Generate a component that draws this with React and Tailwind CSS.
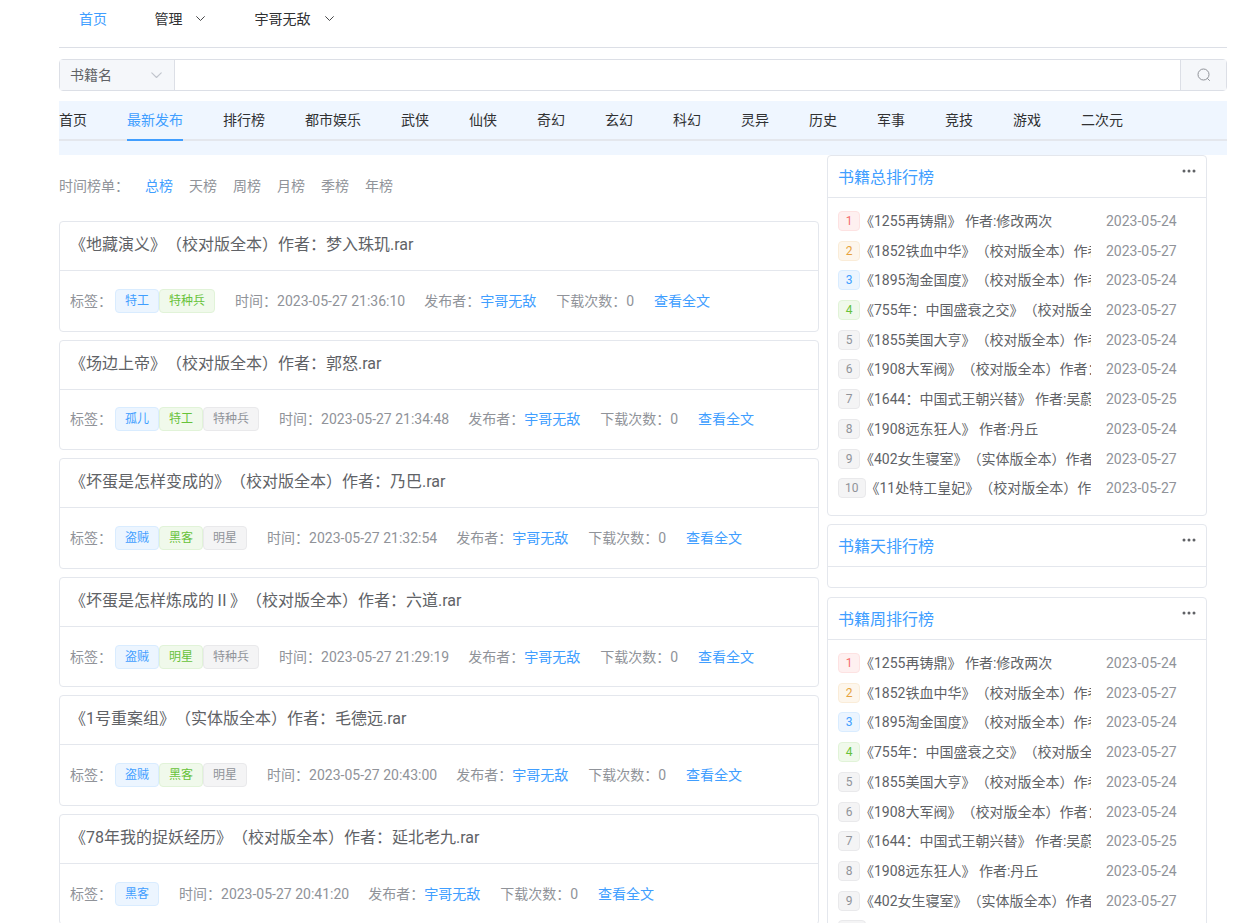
import React from "react";

const tabs = ["首页","最新发布","排行榜","都市娱乐","武侠","仙侠","奇幻","玄幻","科幻","灵异","历史","军事","竞技","游戏","二次元"];
const periods = ["总榜","天榜","周榜","月榜","季榜","年榜"];
const tagStyles = {
  blue: "bg-[#ecf5ff] border-[#d9ecff] text-[#409eff]",
  green: "bg-[#f0f9eb] border-[#e1f3d8] text-[#67c23a]",
  gray: "bg-[#f4f4f5] border-[#e9e9eb] text-[#909399]",
  red: "bg-[#fef0f0] border-[#fde2e2] text-[#f56c6c]",
  orange: "bg-[#fdf6ec] border-[#faecd8] text-[#e6a23c]",
};
const books = [
  { t: "《地藏演义》（校对版全本）作者：梦入珠玑.rar", tags: [["特工","blue"],["特种兵","green"]], time: "2023-05-27 21:36:10" },
  { t: "《场边上帝》（校对版全本）作者：郭怒.rar", tags: [["孤儿","blue"],["特工","green"],["特种兵","gray"]], time: "2023-05-27 21:34:48" },
  { t: "《坏蛋是怎样变成的》（校对版全本）作者：乃巴.rar", tags: [["盗贼","blue"],["黑客","green"],["明星","gray"]], time: "2023-05-27 21:32:54" },
  { t: "《坏蛋是怎样炼成的Ⅱ》（校对版全本）作者：六道.rar", tags: [["盗贼","blue"],["明星","green"],["特种兵","gray"]], time: "2023-05-27 21:29:19" },
  { t: "《1号重案组》（实体版全本）作者：毛德远.rar", tags: [["盗贼","blue"],["黑客","green"],["明星","gray"]], time: "2023-05-27 20:43:00" },
  { t: "《78年我的捉妖经历》（校对版全本）作者：延北老九.rar", tags: [["黑客","blue"]], time: "2023-05-27 20:41:20" },
];
const ranks = [
  ["《1255再铸鼎》 作者:修改两次","2023-05-24"],
  ["《1852铁血中华》（校对版全本）作者：","2023-05-27"],
  ["《1895淘金国度》（校对版全本）作者：","2023-05-24"],
  ["《755年：中国盛衰之交》（校对版全本）","2023-05-27"],
  ["《1855美国大亨》（校对版全本）作者：","2023-05-24"],
  ["《1908大军阀》（校对版全本）作者：","2023-05-24"],
  ["《1644：中国式王朝兴替》 作者:吴蔚","2023-05-25"],
  ["《1908远东狂人》 作者:丹丘","2023-05-24"],
  ["《402女生寝室》（实体版全本）作者：","2023-05-27"],
  ["《11处特工皇妃》（校对版全本）作者：","2023-05-27"],
];
const rankColor = ["red","orange","blue","green"];

function Chevron({ className, w = 9 }) {
  return (
    <svg className={className} width={w} height={w * 0.6} viewBox="0 0 10 6" fill="none" stroke="currentColor" strokeWidth="1" strokeLinecap="round" strokeLinejoin="round">
      <path d="M0.7 0.7 L5 5 L9.3 0.7" />
    </svg>
  );
}

function Tag({ label, color }) {
  return <span className={`inline-flex items-center h-6 px-[9px] rounded border text-xs ${tagStyles[color]}`}>{label}</span>;
}

function BookCard({ b }) {
  return (
    <div className="h-[110.6px] mb-2 rounded border border-[#e4e7ed] bg-white flex flex-col">
      <div className="h-[49px] px-[10px] pb-[2px] flex items-center border-b border-[#e4e7ed] text-base text-[#606266]">{b.t}</div>
      <div className="flex-1 px-[10px] flex items-center text-sm text-[#909399]">
        <span>标签：</span>
        <span className="flex ml-[3px] mr-5">{b.tags.map(([l, c]) => <Tag key={l} label={l} color={c} />)}</span>
        <span>时间：{b.time}</span>
        <span className="ml-[19px]">发布者：<span className="text-[#409eff]">宇哥无敌</span></span>
        <span className="ml-5">下载次数：0</span>
        <span className="ml-5 text-[#409eff]">查看全文</span>
      </div>
    </div>
  );
}

function RankCard({ title, rows }) {
  return (
    <div className="rounded border border-[#e4e7ed] bg-white">
      <div className="relative h-[42px] px-[10px] pt-[3px] flex items-center border-b border-[#e4e7ed] text-base text-[#409eff]">
        {title}
        <svg className="absolute right-[10px] top-[12px]" width="14" height="6" viewBox="0 0 14 6" fill="#606266">
          <circle cx="2" cy="3" r="1.5" /><circle cx="7" cy="3" r="1.5" /><circle cx="12" cy="3" r="1.5" />
        </svg>
      </div>
      {rows ? (
        <div className="pt-[8.2px] pb-[11.8px] px-[10px]">
          {rows.map(([text, date], i) => (
            <div key={i} className="h-[29.7px] flex items-center text-sm">
              <div className="w-[253px] flex items-center overflow-hidden whitespace-nowrap text-[#606266]">
                <span className={`shrink-0 inline-flex items-center justify-center h-5 px-[6px] min-w-[22px] rounded border text-xs ${tagStyles[rankColor[i] || "gray"]}`}>{i + 1}</span>
                <span>{text}</span>
              </div>
              <span className="ml-[15px] text-[#909399]">{date}</span>
            </div>
          ))}
        </div>
      ) : <div className="h-5" />}
    </div>
  );
}

export default function App() {
  return (
    <div className="h-[923px] overflow-hidden bg-white pl-[59px] pr-[22px] font-['Roboto','Noto_Sans_CJK_SC',sans-serif] text-sm [text-spacing-trim:space-all]">
      <nav className="h-12 flex items-center border-b border-[#dcdfe6] pb-[10px] text-[#303133]">
        <span className="ml-5 text-[#409eff]">首页</span>
        <span className="ml-[47.5px]">管理</span>
        <Chevron className="ml-[13px]" />
        <span className="ml-[50px]">宇哥无敌</span>
        <Chevron className="ml-[14px]" />
      </nav>

      <div className="mt-[11px] h-8 flex rounded border border-[#dcdfe6] text-[#606266]">
        <div className="w-[115px] flex items-center justify-between pl-[10px] pr-[12px] bg-[#f5f7fa] border-r border-[#dcdfe6]">
          <span>书籍名</span>
          <Chevron className="text-[#c0c4cc]" w={11} />
        </div>
        <div className="flex-1" />
        <div className="w-[46px] flex items-center justify-center bg-[#f5f7fa] border-l border-[#dcdfe6]">
          <svg width="14" height="14" viewBox="0 0 14 14" fill="none" stroke="#909399" strokeWidth="1">
            <circle cx="6.5" cy="6.5" r="5.5" />
            <path d="M10.5 10.5 L12.5 12.5" strokeLinecap="round" />
          </svg>
        </div>
      </div>

      <div className="mt-[10px] h-[54px] bg-[#eff6ff]">
        <div className="h-10 flex gap-10 border-b-2 border-[#e4e7ed] text-[#303133]">
          {tabs.map((t, i) => (
            <span key={t} className={`h-10 pt-[9px] ${i === 1 ? "text-[#409eff] border-b-2 border-[#409eff]" : ""}`}>{t}</span>
          ))}
        </div>
      </div>

      <div className="flex gap-2">
        <main className="w-[760px]">
          <div className="h-[66px] pb-[4px] flex items-center text-[#909399]">
            <span className="w-[86px]">时间榜单：</span>
            <span className="flex gap-4">
              {periods.map((p, i) => <span key={p} className={i === 0 ? "text-[#409eff]" : ""}>{p}</span>)}
            </span>
          </div>
          {books.map((b) => <BookCard key={b.t} b={b} />)}
        </main>
        <aside className="w-[380px] flex flex-col gap-[8.6px]">
          <RankCard title="书籍总排行榜" rows={ranks} />
          <RankCard title="书籍天排行榜" />
          <RankCard title="书籍周排行榜" rows={ranks} />
        </aside>
      </div>
    </div>
  );
}
